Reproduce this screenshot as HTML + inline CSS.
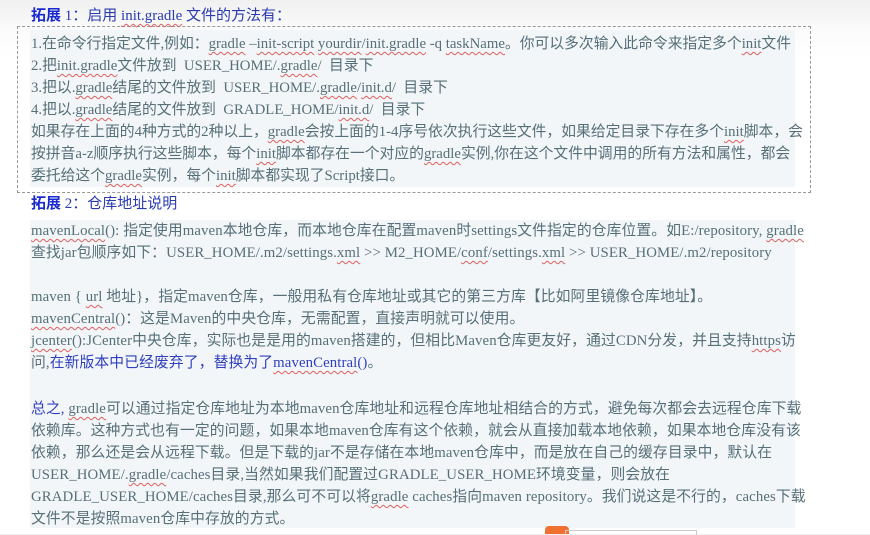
<!DOCTYPE html>
<html><head><meta charset="utf-8"><style>
body{margin:0;width:870px;height:534px;overflow:hidden;background:linear-gradient(#f0f0f0 0,#fbfbfb 30px,#fff 60px);font-family:"Liberation Serif","Noto Sans CJK SC",serif;}
.l{position:absolute;left:31px;white-space:nowrap;font-size:14.8px;color:#566f79;line-height:20px;}
.h{position:absolute;white-space:nowrap;font-size:15px;color:#2a3bb0;line-height:20px;}
.h b{color:#1a2ad0;font-family:"Noto Sans CJK SC",sans-serif;}
.u{text-decoration:underline wavy #e06060;text-decoration-thickness:1px;text-underline-offset:3px;}
.bl{color:#2f3fbf;}
.s{letter-spacing:0.1px;}
</style></head><body>
<div style="position:absolute;left:17px;top:26px;width:792px;height:165px;border:1px dashed #999;"></div>
<div style="position:absolute;left:30px;top:30px;width:765px;height:157px;background:#f3f6f8;"></div>
<div style="position:absolute;left:30px;top:220px;width:765px;height:308px;background:#f3f6f8;"></div>
<div style="position:absolute;left:545px;top:526px;width:24px;height:8px;background:#f07030;border-radius:4px 4px 0 0;"></div>
<div style="position:absolute;left:565px;top:530px;width:130px;height:4px;border:1px solid #ccc;border-bottom:none;"></div>
<div class="h" style="left:31px;top:5px;"><b>拓展</b> 1：启用 <span class="u">init.gradle</span> 文件的方法有：</div>
<div class="l" style="top:34px;">1.在命令行指定文件,例如：<span class="u">gradle</span> –<span class="u">init-script</span> <span class="u">yourdir</span>/<span class="u">init.gradle</span> -q <span class="u">taskName</span>。你可以多次输入此命令来指定多个<span class="u">init</span>文件</div>
<div class="l" style="top:56px;">2.把<span class="u">init.gradle</span>文件放到 &nbsp;USER_HOME/.<span class="u">gradle</span>/ &nbsp;目录下</div>
<div class="l" style="top:78px;">3.把以.<span class="u">gradle</span>结尾的文件放到 &nbsp;USER_HOME/.<span class="u">gradle</span>/<span class="u">init.d</span>/ &nbsp;目录下</div>
<div class="l" style="top:100px;">4.把以.<span class="u">gradle</span>结尾的文件放到 &nbsp;GRADLE_HOME/<span class="u">init.d</span>/ &nbsp;目录下</div>
<div class="l" style="top:122px;">如果存在上面的4种方式的2种以上，<span class="u">gradle</span>会按上面的1-4序号依次执行这些文件，如果给定目录下存在多个<span class="u">init</span>脚本，会</div>
<div class="l" style="top:144px;">按拼音a-z顺序执行这些脚本，每个<span class="u">init</span>脚本都存在一个对应的<span class="u">gradle</span>实例,你在这个文件中调用的所有方法和属性，都会</div>
<div class="l" style="top:166px;">委托给这个<span class="u">gradle</span>实例，每个<span class="u">init</span>脚本都实现了Script接口。</div>
<div class="h" style="left:31px;top:193px;"><b>拓展</b> 2：仓库地址说明</div>
<div class="l s" style="top:221px;"><span class="u">mavenLocal</span>(): 指定使用maven本地仓库，而本地仓库在配置maven时settings文件指定的仓库位置。如E:/repository, <span class="u">gradle</span></div>
<div class="l s" style="top:243px;">查找jar包顺序如下：USER_HOME/.m2/settings.<span class="u">xml</span> &gt;&gt; M2_HOME/<span class="u">conf</span>/settings.<span class="u">xml</span> &gt;&gt; USER_HOME/.m2/repository</div>
<div class="l s" style="top:287px;">maven { <span class="u">url</span> 地址}，指定maven仓库，一般用私有仓库地址或其它的第三方库【比如阿里镜像仓库地址】。</div>
<div class="l s" style="top:309px;"><span class="u">mavenCentral</span>()：这是Maven的中央仓库，无需配置，直接声明就可以使用。</div>
<div class="l s" style="top:331px;"><span class="u">jcenter</span>():JCenter中央仓库，实际也是是用的maven搭建的，但相比Maven仓库更友好，通过CDN分发，并且支持<span class="u">https</span>访</div>
<div class="l s" style="top:353px;">问,<span class="bl">在新版本中已经废弃了，替换为了<span class="u">mavenCentral</span>()</span>。</div>
<div class="l s" style="top:399px;"><span class="bl">总之,</span> <span class="u">gradle</span>可以通过指定仓库地址为本地maven仓库地址和远程仓库地址相结合的方式，避免每次都会去远程仓库下载</div>
<div class="l s" style="top:421px;">依赖库。这种方式也有一定的问题，如果本地maven仓库有这个依赖，就会从直接加载本地依赖，如果本地仓库没有该</div>
<div class="l s" style="top:443px;">依赖，那么还是会从远程下载。但是下载的jar不是存储在本地maven仓库中，而是放在自己的缓存目录中，默认在</div>
<div class="l s" style="top:465px;">USER_HOME/.<span class="u">gradle</span>/caches目录,当然如果我们配置过GRADLE_USER_HOME环境变量，则会放在</div>
<div class="l s" style="top:487px;">GRADLE_USER_HOME/caches目录,那么可不可以将<span class="u">gradle</span> caches指向maven repository。我们说这是不行的，caches下载</div>
<div class="l s" style="top:509px;">文件不是按照maven仓库中存放的方式。</div>
</body></html>
